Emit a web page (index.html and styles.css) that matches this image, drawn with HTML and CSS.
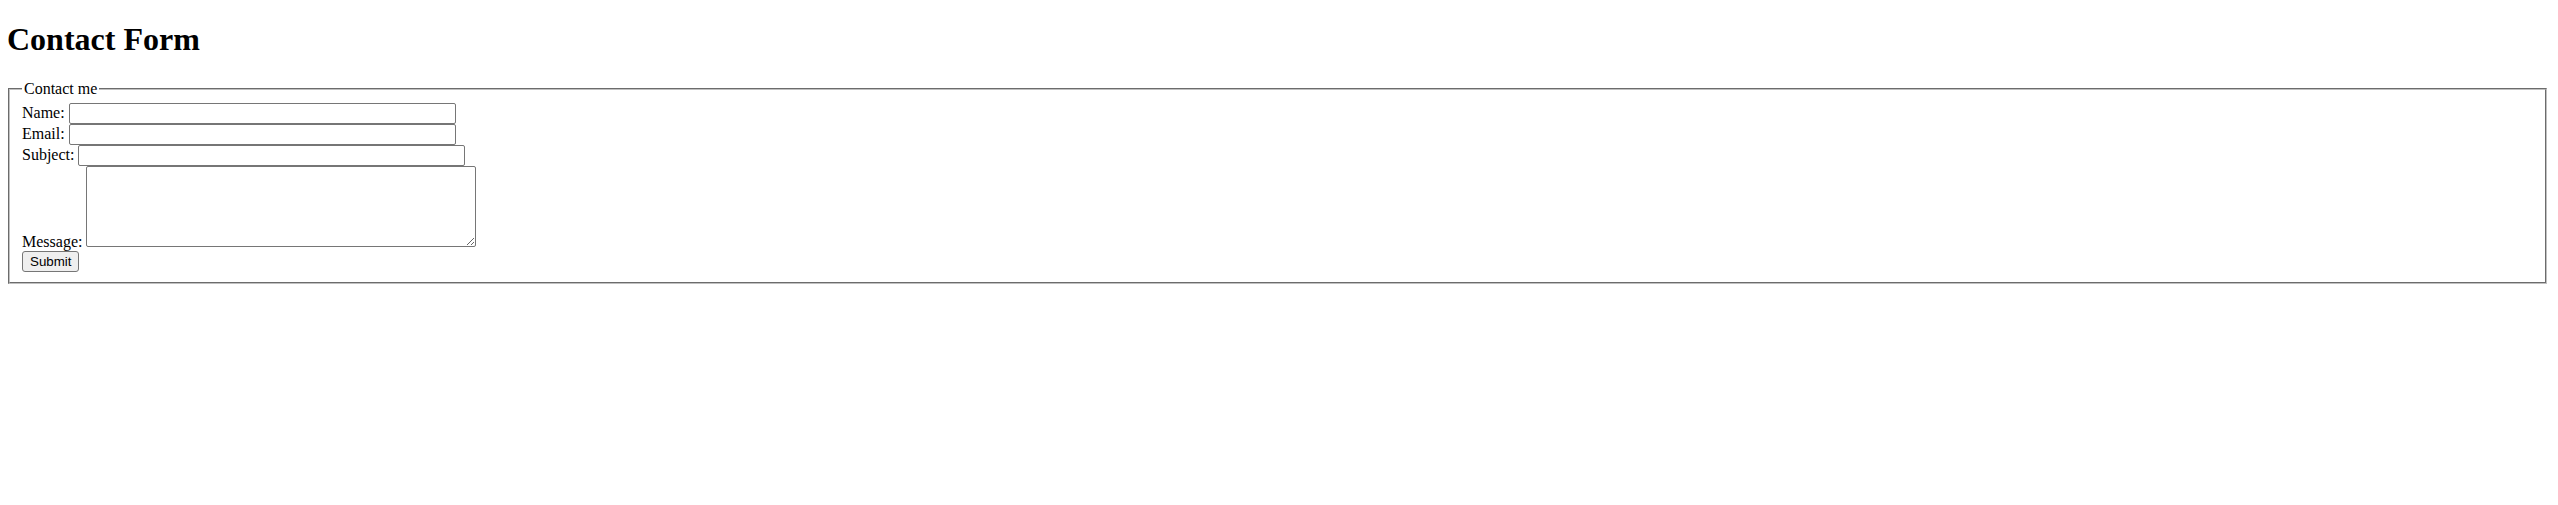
FILE: index.html
```html
<!DOCTYPE html>
<html lang="en">
<head>
<meta charset="utf-8">
<title>Contact Form</title>
<link rel="stylesheet" href="styles.css">
</head>
<body class="page">
<h1 class="title">Contact Form</h1>
<form class="contact-form">
  <fieldset class="box">
    <legend class="box-legend">Contact me</legend>
    <label class="field-label" for="name">Name:</label> <input class="field" type="text" id="name"><br>
    <label class="field-label" for="email">Email:</label> <input class="field" type="email" id="email"><br>
    <label class="field-label" for="subject">Subject:</label> <input class="field" type="text" id="subject"><br>
    <label class="field-label" for="message">Message:</label> <textarea class="field-area" id="message"></textarea><br>
    <input class="btn" type="submit" value="Submit">
  </fieldset>
</form>
</body>
</html>
```
FILE: styles.css
```css
html, body {
  background: #ffffff;
}
.page {
  margin: 0 8px 8px 8px;
  font-family: "Liberation Serif", "Times New Roman", serif;
  font-size: 16px;
  color: #000000;
}
.title {
  font-size: 32px;
  font-weight: bold;
  margin: 21.44px 0 21.44px -1px;
}
.contact-form {
  margin: 0;
}
.box {
  margin: 0 3px 0 0;
  padding: 5.6px 12px 10px;
  border: 2px groove rgb(192, 192, 192);
  min-width: min-content;
}
.box-legend {
  padding: 0 2px;
}
.field-label {
  font-family: "Liberation Serif", "Times New Roman", serif;
  font-size: 16px;
}
.field {
  box-sizing: border-box;
  width: 387px;
  height: 21px;
  margin: 0;
  padding: 1px 2px;
  border: 1px solid #767676;
  border-radius: 2px;
  font-family: "Liberation Sans", Arial, sans-serif;
  font-size: 13.33px;
  background: #ffffff;
}
.field-area {
  box-sizing: border-box;
  width: 390px;
  height: 81px;
  margin: 0;
  padding: 2px;
  border: 1px solid #767676;
  border-radius: 2px;
  font-family: "Liberation Mono", monospace;
  font-size: 13.33px;
  background: #ffffff;
  resize: both;
}
.btn {
  box-sizing: border-box;
  height: 21px;
  margin: 0;
  padding: 1px 7px;
  border: 1px solid #767676;
  border-radius: 3px;
  background: #efefef;
  color: #000000;
  font-family: "Liberation Sans", Arial, sans-serif;
  font-size: 13.33px;
}
```
